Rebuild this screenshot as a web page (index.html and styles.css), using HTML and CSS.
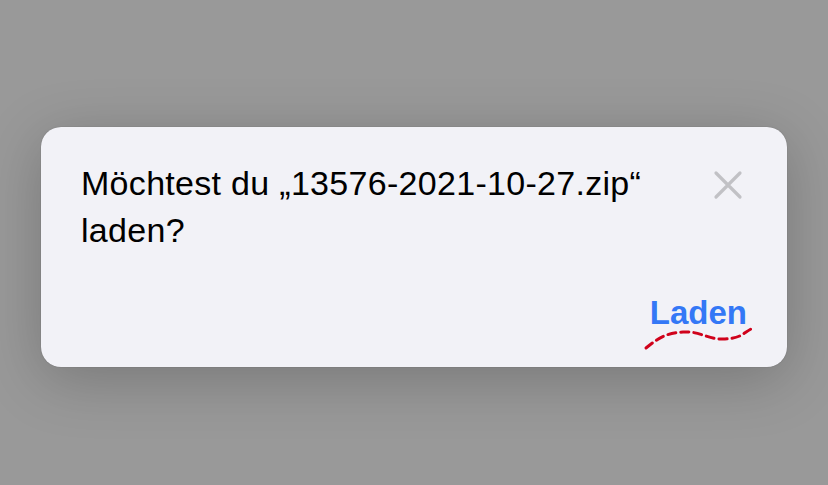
FILE: index.html
```html
<!DOCTYPE html>
<html lang="de">
<head>
    <meta charset="UTF-8">
    <meta name="viewport" content="width=device-width, initial-scale=1.0">
    <title>Download</title>
    <link rel="stylesheet" href="styles.css">
</head>
<body>
    <div class="dialog">
        <div class="dialog-top">
            <p class="message">Möchtest du „13576-2021-10-27.zip“ laden?</p>
            <button class="close" aria-label="Schließen">
                <svg width="30" height="30" viewBox="0 0 30 30">
                    <path d="M3 3 L27 27 M27 3 L3 27" stroke="#c1c1c5" stroke-width="3.2" stroke-linecap="round" fill="none"/>
                </svg>
            </button>
        </div>
        <div class="dialog-actions">
            <button class="load">Laden</button>
            <svg class="squiggle" width="112" height="24" viewBox="0 0 112 24">
                <path d="M3 21 C 14 12, 22 6, 40 5 S 65 13, 82 12 S 100 6, 108 2" stroke="#d0021b" stroke-width="3" stroke-dasharray="8 5" fill="none" stroke-linecap="round"/>
            </svg>
        </div>
    </div>
</body>
</html>
```

FILE: styles.css
```css
body {
    margin: 0;
    padding: 127px 0 0;
    background-color: #999999;
    font-family: "Liberation Sans", Arial, sans-serif;
    height: 485px;
    box-sizing: border-box;
    overflow: hidden;
}

.dialog {
    width: 746px;
    height: 240px;
    margin: 0 auto;
    box-sizing: border-box;
    background-color: #f2f2f7;
    border-radius: 20px;
    padding: 33px 40px 0 40px;
    box-shadow: 0 0 1px rgba(0, 0, 0, 0.35), 0 12px 60px rgba(0, 0, 0, 0.22);
    display: flex;
    flex-direction: column;
}

.dialog-top {
    display: flex;
    justify-content: space-between;
    align-items: flex-start;
}

.message {
    margin: 0;
    width: 600px;
    font-size: 34px;
    letter-spacing: 0.3px;
    line-height: 47px;
    color: #000;
}

.close {
    background: none;
    border: none;
    padding: 0;
    margin: 10px 4px 0 0;
    cursor: pointer;
}

.dialog-actions {
    position: relative;
    display: flex;
    justify-content: flex-end;
    margin-top: 40px;
}

.load {
    background: none;
    border: none;
    padding: 0;
    font-family: inherit;
    font-size: 33px;
    line-height: 38px;
    font-weight: bold;
    color: #3478f6;
    cursor: pointer;
}

.squiggle {
    position: absolute;
    right: -8px;
    top: 33px;
}
```
